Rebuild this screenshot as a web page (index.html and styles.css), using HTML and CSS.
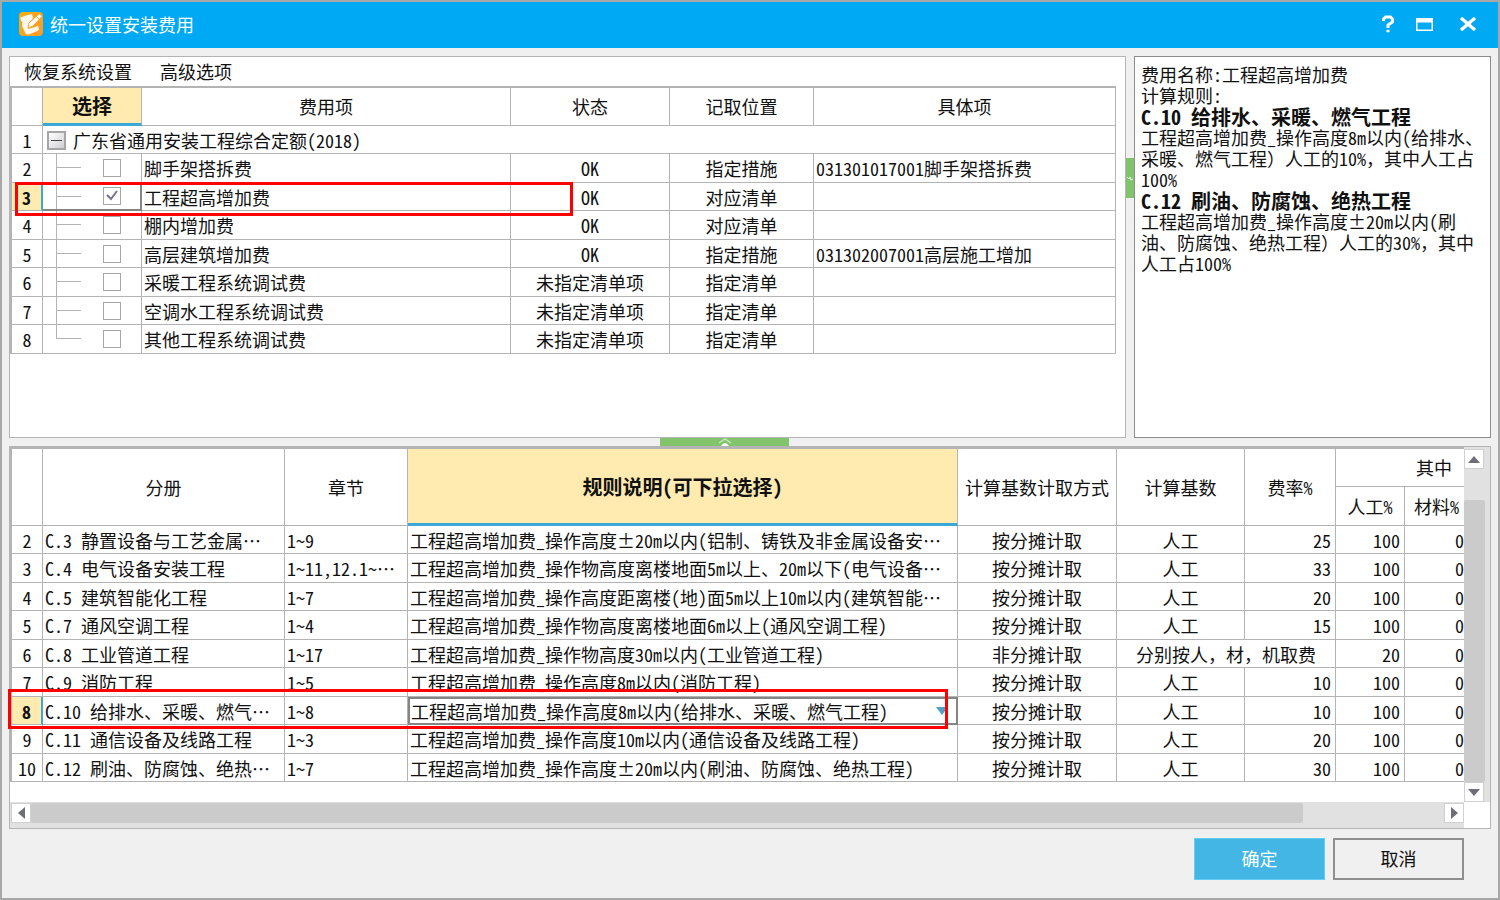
FILE: index.html
```html
<!DOCTYPE html>
<html lang="zh-CN">
<head>
<meta charset="utf-8">
<title>统一设置安装费用</title>
<link rel="stylesheet" href="styles.css">
</head>
<body>
<div class="window">
  <header class="titlebar">
    <svg class="app-icon" viewBox="0 0 24 24" aria-hidden="true">
      <defs><linearGradient id="og" x1="0" y1="0" x2="1" y2="1"><stop offset="0" stop-color="#f5ae14"/><stop offset="1" stop-color="#fb9a28"/></linearGradient></defs>
      <rect width="24" height="24" rx="4" fill="url(#og)"/>
      <path d="M13 2C9 3 5 4 1.500 5.500c0 2 .5 3.500 2 5L3 14l3.500 7.500c.7 1 1.800 1.300 3 1L18.500 19l1.500-1.500-1-4-3 1.500-5 1.500-2-1 1-4L14 6z" fill="#fff8ea"/>
      <path d="M20.500 1.500 23 4.500 14 14l-5 2.500L10 11z" fill="#fff" stroke="#f6a422" stroke-width="1"/>
      <path d="M17.500 4.500l3 3" stroke="#f6a422" stroke-width="1"/>
    </svg>
    <h1 class="title">统一设置安装费用</h1>
    <div class="window-controls">
      <button class="win-btn" aria-label="帮助"><svg width="12" height="18" viewBox="0 0 12 18"><path d="M1.500 6V4l2-2h5l2 2v3L6 10v3M6 14.800v2.400" fill="none" stroke="#fff" stroke-width="3"/></svg></button>
      <button class="win-btn" aria-label="最大化"><svg width="17" height="13" viewBox="0 0 17 13"><path d="M0 0h17v13H0zM1.500 4.500v7h14v-7z" fill="#fff" fill-rule="evenodd"/></svg></button>
      <button class="win-btn" aria-label="关闭"><svg width="18" height="14" viewBox="0 0 18 14"><path d="M2 1l14 12M16 1L2 13" stroke="#fff" stroke-width="3.400"/></svg></button>
    </div>
  </header>

  <main class="content">
    <div class="upper">
      <section class="panel fee-panel">
        <nav class="menu">
          <button class="menu-item">恢复系统设置</button>
          <button class="menu-item">高级选项</button>
        </nav>
        <table class="grid fee-grid">
          <colgroup><col class="c-no"><col class="c-pick"><col class="c-fee"><col class="c-state"><col class="c-pos"><col></colgroup>
          <thead><tr><th></th><th class="active">选择</th><th>费用项</th><th>状态</th><th>记取位置</th><th>具体项</th></tr></thead>
          <tbody>
            <tr><td class="no">1</td><td colspan="5"><div class="group"><button class="toggle" aria-label="折叠"></button><span>广东省通用安装工程综合定额(2018)</span></div></td></tr>
            <tr><td class="no">2</td><td class="tree"><input type="checkbox" aria-label="脚手架搭拆费"></td><td>脚手架搭拆费</td><td class="mid">OK</td><td class="mid">指定措施</td><td>031301017001脚手架搭拆费</td></tr>
            <tr><td class="no current">3</td><td class="tree focus"><input type="checkbox" checked aria-label="工程超高增加费"></td><td>工程超高增加费</td><td class="mid">OK</td><td class="mid">对应清单</td><td></td></tr>
            <tr><td class="no">4</td><td class="tree"><input type="checkbox" aria-label="棚内增加费"></td><td>棚内增加费</td><td class="mid">OK</td><td class="mid">对应清单</td><td></td></tr>
            <tr><td class="no">5</td><td class="tree"><input type="checkbox" aria-label="高层建筑增加费"></td><td>高层建筑增加费</td><td class="mid">OK</td><td class="mid">指定措施</td><td>031302007001高层施工增加</td></tr>
            <tr><td class="no">6</td><td class="tree"><input type="checkbox" aria-label="采暖工程系统调试费"></td><td>采暖工程系统调试费</td><td class="mid">未指定清单项</td><td class="mid">指定清单</td><td></td></tr>
            <tr><td class="no">7</td><td class="tree"><input type="checkbox" aria-label="空调水工程系统调试费"></td><td>空调水工程系统调试费</td><td class="mid">未指定清单项</td><td class="mid">指定清单</td><td></td></tr>
            <tr><td class="no">8</td><td class="tree last"><input type="checkbox" aria-label="其他工程系统调试费"></td><td>其他工程系统调试费</td><td class="mid">未指定清单项</td><td class="mid">指定清单</td><td></td></tr>
          </tbody>
        </table>
      </section>
      <div class="split-v"><div class="grip"><svg width="8" height="8" viewBox="0 0 8 8"><path d="M1 3l2 2 1-2 1 3 2-1" fill="none" stroke="#e6f5e0"/></svg></div></div>
      <aside class="panel info">
        <p>费用名称:工程超高增加费</p>
        <p>计算规则:</p>
        <p class="rule-name">C.10 给排水、采暖、燃气工程</p>
        <p>工程超高增加费_操作高度8m以内(给排水、采暖、燃气工程）人工的10%，其中人工占100%</p>
        <p class="rule-name">C.12 刷油、防腐蚀、绝热工程</p>
        <p>工程超高增加费_操作高度±20m以内(刷油、防腐蚀、绝热工程）人工的30%，其中人工占100%</p>
      </aside>
    </div>

    <div class="split-h"><div class="grip"><svg width="14" height="8" viewBox="0 0 14 8"><path d="M1 5l6-4 6 4" fill="none" stroke="#c5e6ba" stroke-width="1.500"/><path d="M3 8q4-6 8 0z" fill="#fff"/></svg></div></div>

    <section class="panel rules">
      <div class="viewport">
        <table class="grid rule-grid">
          <colgroup><col class="c-no"><col class="c-book"><col class="c-chapter"><col><col class="c-mode"><col class="c-base"><col class="c-rate"><col class="c-labor"><col class="c-mat"><col class="c-mat"></colgroup>
          <thead>
            <tr><th rowspan="2"></th><th rowspan="2">分册</th><th rowspan="2">章节</th><th rowspan="2" class="active">规则说明(可下拉选择)</th><th rowspan="2">计算基数计取方式</th><th rowspan="2">计算基数</th><th rowspan="2">费率%</th><th colspan="3">其中</th></tr>
            <tr><th>人工%</th><th>材料%</th><th></th></tr>
          </thead>
          <tbody>
            <tr><td class="no">2</td><td>C.3 静置设备与工艺金属…</td><td>1~9</td><td>工程超高增加费_操作高度±20m以内(铝制、铸铁及非金属设备安…</td><td class="mid">按分摊计取</td><td class="mid">人工</td><td class="num">25</td><td class="num">100</td><td class="num">0</td><td></td></tr>
            <tr><td class="no">3</td><td>C.4 电气设备安装工程</td><td>1~11,12.1~…</td><td>工程超高增加费_操作物高度离楼地面5m以上、20m以下(电气设备…</td><td class="mid">按分摊计取</td><td class="mid">人工</td><td class="num">33</td><td class="num">100</td><td class="num">0</td><td></td></tr>
            <tr><td class="no">4</td><td>C.5 建筑智能化工程</td><td>1~7</td><td>工程超高增加费_操作高度距离楼(地)面5m以上10m以内(建筑智能…</td><td class="mid">按分摊计取</td><td class="mid">人工</td><td class="num">20</td><td class="num">100</td><td class="num">0</td><td></td></tr>
            <tr><td class="no">5</td><td>C.7 通风空调工程</td><td>1~4</td><td>工程超高增加费_操作物高度离楼地面6m以上(通风空调工程)</td><td class="mid">按分摊计取</td><td class="mid">人工</td><td class="num">15</td><td class="num">100</td><td class="num">0</td><td></td></tr>
            <tr><td class="no">6</td><td>C.8 工业管道工程</td><td>1~17</td><td>工程超高增加费_操作物高度30m以内(工业管道工程)</td><td class="mid">非分摊计取</td><td class="mid" colspan="2">分别按人，材，机取费</td><td class="num">20</td><td class="num">0</td><td></td></tr>
            <tr><td class="no">7</td><td>C.9 消防工程</td><td>1~5</td><td>工程超高增加费_操作高度8m以内(消防工程)</td><td class="mid">按分摊计取</td><td class="mid">人工</td><td class="num">10</td><td class="num">100</td><td class="num">0</td><td></td></tr>
            <tr><td class="no current">8</td><td>C.10 给排水、采暖、燃气…</td><td>1~8</td><td class="editor"><select aria-label="规则说明"><option>工程超高增加费_操作高度8m以内(给排水、采暖、燃气工程)</option></select></td><td class="mid">按分摊计取</td><td class="mid">人工</td><td class="num">10</td><td class="num">100</td><td class="num">0</td><td></td></tr>
            <tr><td class="no">9</td><td>C.11 通信设备及线路工程</td><td>1~3</td><td>工程超高增加费_操作高度10m以内(通信设备及线路工程)</td><td class="mid">按分摊计取</td><td class="mid">人工</td><td class="num">20</td><td class="num">100</td><td class="num">0</td><td></td></tr>
            <tr><td class="no">10</td><td>C.12 刷油、防腐蚀、绝热…</td><td>1~7</td><td>工程超高增加费_操作高度±20m以内(刷油、防腐蚀、绝热工程)</td><td class="mid">按分摊计取</td><td class="mid">人工</td><td class="num">30</td><td class="num">100</td><td class="num">0</td><td></td></tr>
          </tbody>
        </table>
      </div>
      <div class="vbar">
        <button class="arrow" aria-label="向上"><svg width="12" height="7" viewBox="0 0 12 7"><path d="M0 7l6-7 6 7z"/></svg></button>
        <div class="vtrack"><div class="vthumb"></div></div>
        <button class="arrow" aria-label="向下"><svg width="12" height="7" viewBox="0 0 12 7"><path d="M0 0l6 7 6-7z"/></svg></button>
      </div>
      <div class="hbar">
        <button class="arrow" aria-label="向左"><svg width="7" height="12" viewBox="0 0 7 12"><path d="M7 0L0 6l7 6z"/></svg></button>
        <div class="htrack"><div class="hthumb"></div></div>
        <button class="arrow" aria-label="向右"><svg width="7" height="12" viewBox="0 0 7 12"><path d="M0 0l7 6-7 6z"/></svg></button>
      </div>
      <div class="corner"></div>
    </section>
  </main>

  <footer class="actions">
    <button class="btn primary">确定</button>
    <button class="btn">取消</button>
  </footer>

  <div class="mark mark-fee"></div>
  <div class="mark mark-rule"></div>
</div>
</body>
</html>
```
FILE: styles.css
```css
* { box-sizing: border-box; }

body {
  margin: 0;
  color: #111;
  font: 18px/21px "Noto Sans Mono CJK SC", "Noto Sans CJK SC", sans-serif;
  font-kerning: none;
}

button, select, input { font: inherit; color: inherit; margin: 0; padding: 0; }
button { border: 0; background: none; }

.window {
  position: relative;
  display: flex;
  flex-direction: column;
  min-height: 100vh;
  border: 2px solid #a8a8a8;
  background: #f0f0f0;
}

.titlebar {
  display: flex;
  align-items: center;
  gap: 7px;
  height: 46px;
  padding: 0 21px 2px 17px;
  background: #00a9f3;
  color: #fff;
}
.app-icon { width: 24px; height: 24px; }
.title { margin: 0; font-size: 18px; font-weight: 400; }
.window-controls { display: flex; gap: 22px; margin-left: auto; }
.win-btn { display: flex; align-items: center; justify-content: center; min-width: 12px; height: 24px; }
.win-btn + .win-btn + .win-btn { margin-left: 4px; }

.content {
  flex: 1;
  display: flex;
  flex-direction: column;
  padding: 8px 7px 0;
}
.panel { border: 1px solid #b4b4b4; background: #fff; }

.upper {
  flex: 1 1 1px;
  display: grid;
  grid-template-columns: minmax(0, 1fr) 8px 357px;
}
.menu { display: flex; gap: 28px; height: 29px; padding: 0 14px; }

.info { padding: 7px 6px; border-color: #8c8c8c; }
.info p { margin: 0; }
.info .rule-name { font-size: 20px; font-weight: 700; }

.split-v { padding-top: 102px; }
.grip { display: flex; align-items: center; justify-content: center; background: #82c46c; }
.split-v .grip { height: 40px; }
.split-h { height: 8px; padding-left: 651px; }
.split-h .grip { width: 129px; height: 8px; }

.grid {
  table-layout: fixed;
  border-spacing: 0;
  border: solid #b4b4b4;
  border-width: 2px 0 0 2px;
}
.grid th, .grid td {
  height: 28px;
  padding: 1px 2px 0;
  overflow: hidden;
  border: solid #b4b4b4;
  border-width: 0 1px 1px 0;
  text-align: left;
  white-space: nowrap;
}
.grid tbody tr:nth-child(even) td { height: 29px; }
.grid th { height: 38px; padding: 0; font-weight: 400; text-align: center; }
.grid th.active {
  border-bottom: 3px solid #3ba9d8;
  background: #ffebb0;
  font-size: 20px;
  font-weight: 700;
}
.grid .no, .grid .mid { text-align: center; }
.grid .num { padding-right: 4px; text-align: right; }
.grid .no.current {
  border-right: 2px solid #3ba9d8;
  background: #ffebb0;
  font-weight: 700;
}

.fee-grid { width: calc(100% - 9px); }
.rule-grid { width: calc(100% + 69px); }
.rule-grid tr + tr th { height: 39px; }
.c-no { width: 31px; }
.c-pick { width: 99px; }
.c-fee { width: 369px; }
.c-state { width: 159px; }
.c-pos { width: 144px; }
.c-book { width: 242px; }
.c-chapter { width: 123px; }
.c-mode { width: 159px; }
.c-base { width: 128px; }
.c-rate { width: 91px; }
.c-labor { width: 69px; }
.c-mat { width: 64px; }

.group { display: flex; align-items: center; gap: 7px; padding-left: 2px; }
.toggle {
  width: 19px;
  height: 19px;
  border: 2px solid #a6a6a6;
  background: linear-gradient(#444, #444) center / 11px 1px no-repeat, linear-gradient(135deg, #fff, #d0d0d4);
}

.grid .tree {
  padding: 0 0 0 60px;
  background:
    linear-gradient(#b4b4b4, #b4b4b4) 13px 0 / 1px 100% no-repeat,
    linear-gradient(#b4b4b4, #b4b4b4) 13px 13px / 25px 1px no-repeat;
}
.grid .tree.last {
  background:
    linear-gradient(#b4b4b4, #b4b4b4) 13px 0 / 1px 13px no-repeat,
    linear-gradient(#b4b4b4, #b4b4b4) 13px 13px / 25px 1px no-repeat;
}
.grid .tree.focus { border-right: 2px solid #858585; border-bottom: 2px solid #858585; }
.tree input {
  display: block;
  width: 18px;
  height: 18px;
  appearance: none;
  border: 1px solid #a6a6a6;
  background: #fff;
}
.tree input:checked {
  background: #fff url("data:image/svg+xml,%3Csvg xmlns='http://www.w3.org/2000/svg' viewBox='0 0 16 16'%3E%3Cpath d='M3 7l4 4 6-8' fill='none' stroke='%2373748c' stroke-width='2'/%3E%3C/svg%3E");
}

.grid .editor { padding: 0; border: 2px solid #858585; }
.editor select {
  display: block;
  width: 100%;
  height: 24px;
  padding-left: 1px;
  appearance: none;
  border: 0;
  border-radius: 0;
  line-height: 24px;
  background: url("data:image/svg+xml,%3Csvg xmlns='http://www.w3.org/2000/svg' width='12' height='8'%3E%3Cpath d='M0 0h12L6 8z' fill='%23509fcb'/%3E%3C/svg%3E") right 8px center no-repeat;
}

.rules {
  flex: 1 1 0px;
  display: grid;
  grid-template: minmax(0, 1fr) 26px / minmax(0, 1fr) 26px;
}
.viewport { overflow: hidden; }
.vbar { display: flex; flex-direction: column; padding: 2px 5px 0 0; background: #e1e1e1; }
.hbar { display: flex; padding: 1px 0 4px 1px; background: #e1e1e1; }
.corner { background: #fff; }
.arrow {
  display: flex;
  align-items: center;
  justify-content: center;
  flex: none;
  width: 20px;
  height: 20px;
  border: 1px solid #d0d0d0;
  background: #fff;
  fill: #6d6e78;
}
.vtrack { flex: 1; display: flex; flex-direction: column; justify-content: flex-end; }
.vthumb { height: 90%; border-radius: 2px; background: #cbcbcb; }
.htrack { flex: 1; }
.hthumb { width: 90%; height: 20px; border-radius: 2px; background: #cbcbcb; }

.actions { display: flex; justify-content: flex-end; gap: 8px; padding: 9px 34px 18px; }
.btn { width: 131px; height: 42px; padding-bottom: 2px; border: 2px solid #8f8f8f; }
.btn.primary { border: 1px solid #62cdf5; background: #43b6e5; color: #fff; }

/* Highlight frames drawn over the grids */
.mark { position: absolute; border: 3px solid #f00; pointer-events: none; }
.mark-fee { left: 13px; top: 180px; width: 558px; height: 34px; }
.mark-rule { left: 6px; top: 687px; width: 940px; height: 40px; }
```
